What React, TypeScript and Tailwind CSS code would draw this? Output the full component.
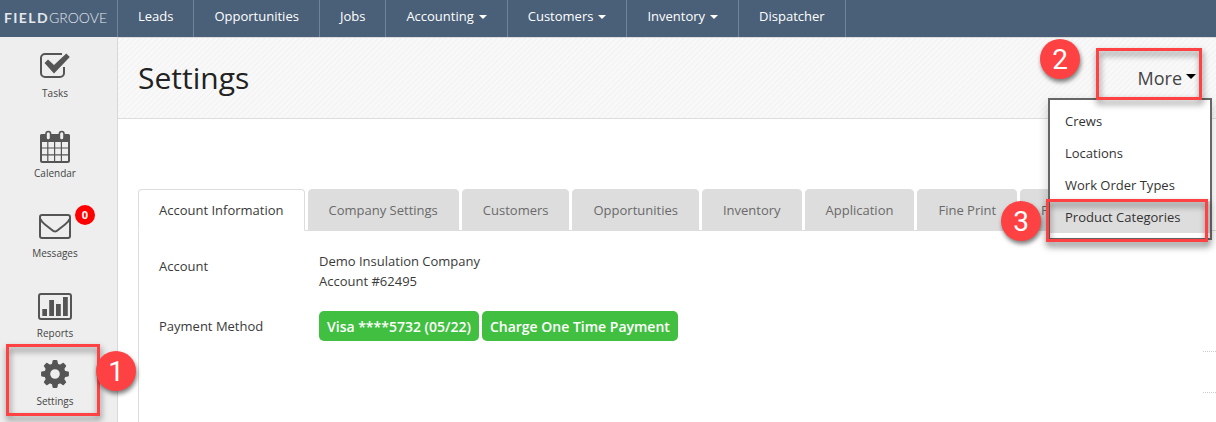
import type { ReactNode } from "react";
import clsx from "clsx";

const navItems = [
  { label: "Leads" },
  { label: "Opportunities" },
  { label: "Jobs" },
  { label: "Accounting", menu: true },
  { label: "Customers", menu: true },
  { label: "Inventory", menu: true },
  { label: "Dispatcher" },
];

const tabs = [
  "Account Information",
  "Company Settings",
  "Customers",
  "Opportunities",
  "Inventory",
  "Application",
  "Fine Print",
  "F",
];

const moreItems = ["Crews", "Locations", "Work Order Types", "Product Categories"];

function TasksIcon() {
  return (
    <svg width="30" height="26" viewBox="0 0 30 26" aria-hidden="true">
      <path
        d="M22 1H5a4 4 0 0 0-4 4v15a4 4 0 0 0 4 4h15a4 4 0 0 0 4-4v-6"
        fill="none"
        stroke="#555"
        strokeWidth="2"
      />
      <path d="M4.500 10l3.500-3.500 6 5.500L26.300.6l3.500 3.500L14 20.500z" fill="#555" />
    </svg>
  );
}

function CalendarIcon() {
  return (
    <svg width="30" height="33" viewBox="0 0 30 33" aria-hidden="true">
      <path d="M2 4h26a2 2 0 0 1 2 2v6H0V6a2 2 0 0 1 2-2z" fill="#555" />
      <rect x="1" y="5" width="28" height="27" rx="1.5" fill="none" stroke="#555" strokeWidth="2" />
      <path d="M7.8 12v20M14.6 12v20M21.4 12v20M1 18h28M1 24.8h28" stroke="#555" strokeWidth="1.2" />
      <rect x="6" y="1.5" width="4.6" height="8.5" rx="2.3" fill="#eee" stroke="#555" strokeWidth="1.6" />
      <rect x="19.4" y="1.5" width="4.6" height="8.5" rx="2.3" fill="#eee" stroke="#555" strokeWidth="1.6" />
    </svg>
  );
}

function MessagesIcon() {
  return (
    <svg width="32" height="25" viewBox="0 0 32 25" aria-hidden="true">
      <rect x="1" y="1" width="30" height="23" rx="2" fill="none" stroke="#555" strokeWidth="2" />
      <path
        d="M1.500 5C2 7 4 9 6 10.500l7 5.500c2 2 4 2 6 0l7-5.500c2-1.500 4-3.500 4.500-5.500"
        fill="none"
        stroke="#555"
        strokeWidth="2"
      />
    </svg>
  );
}

function ReportsIcon() {
  return (
    <svg width="34" height="27" viewBox="0 0 34 27" aria-hidden="true">
      <rect x="1" y="1" width="32" height="25" rx="2" fill="none" stroke="#555" strokeWidth="2" />
      <path d="M4.300 16H9v7H4.300zM11.200 7H16v16h-4.800zM18 11h4.800v12H18zM25 4h4.800v19H25z" fill="#555" />
    </svg>
  );
}

function SettingsIcon() {
  const teeth = [0, 45, 90, 135, 180, 225, 270, 315];
  return (
    <svg width="28" height="28" viewBox="-14 -14 28 28" aria-hidden="true">
      <circle r="7.700" fill="none" stroke="#555" strokeWidth="5.800" />
      {teeth.map((angle) => (
        <path key={angle} d="M-3.300-9l.9-4.200q.2-.7.900-.7h3q.7 0 .9.700l.9 4.200z" fill="#555" transform={`rotate(${angle})`} />
      ))}
    </svg>
  );
}

function Caret({ className }: { className?: string }) {
  return (
    <svg className={className} viewBox="0 0 8 4" aria-hidden="true">
      <path d="M0 0h8L4 4z" fill="currentColor" />
    </svg>
  );
}

/** Numbered red callout with a soft shadow. */
function StepBadge({ step, className }: { step: number; className: string }) {
  return (
    <span
      className={clsx(
        "absolute z-20 flex size-10 items-center justify-center rounded-full bg-[#fe4243] pt-0.5 font-['Roboto',sans-serif] text-[28px] leading-none text-white shadow-[1px_3px_4px_rgba(0,0,0,0.5)]",
        className
      )}
    >
      {step}
    </span>
  );
}

/** Red outline drawn around whatever the step refers to. */
function StepFrame({ className }: { className: string }) {
  return (
    <span
      className={clsx(
        "pointer-events-none absolute z-10 border-3 border-[#fe4243] drop-shadow-[1px_4px_3px_rgba(0,0,0,0.5)]",
        className
      )}
    />
  );
}

function SideLink({ label, icon, children, className }: { label: string; icon: ReactNode; children?: ReactNode; className?: string }) {
  return (
    <div className={clsx("relative w-[110px]", className)}>
      <a href="#" className="flex flex-col items-center text-[10px] leading-4 text-[#444]">
        <span className="flex h-9 items-center">{icon}</span>
        <span className="mt-px">{label}</span>
      </a>
      {children}
    </div>
  );
}

function TopNav() {
  return (
    <nav className="flex h-[37px] bg-[#4a6078] text-[13px] text-white">
      <a
        href="#"
        className="flex w-[118px] items-center border-r border-[#71839a] pb-[3px] pl-1 font-['Lato',sans-serif] text-[14px] text-[#e4e8ec]"
      >
        <span className="font-bold tracking-widest">FIELD</span>
        <span className="font-light">GROOVE</span>
      </a>
      {navItems.map((item) =>
        item.menu ? (
          <button key={item.label} type="button" className="flex items-center gap-[5px] border-r border-[#71839a] px-5 pb-[3px]">
            {item.label}
            <Caret className="h-1 w-2" />
          </button>
        ) : (
          <a key={item.label} href="#" className="flex items-center border-r border-[#71839a] px-5 pb-[3px]">
            {item.label}
          </a>
        )
      )}
    </nav>
  );
}

function Sidebar() {
  return (
    <aside className="w-[118px] shrink-0 border-r border-[#d8d8d8] bg-[#eee] pt-[11px]">
      <SideLink label="Tasks" icon={<TasksIcon />} className="h-20" />
      <SideLink label="Calendar" icon={<CalendarIcon />} className="h-20" />
      <SideLink label="Messages" icon={<MessagesIcon />} className="h-20">
        <span className="absolute -top-[3px] left-[75px] flex size-5 items-center justify-center rounded-full bg-[#f00] text-[11px] font-bold text-white">
          0
        </span>
      </SideLink>
      <SideLink label="Reports" icon={<ReportsIcon />} className="h-[68px]" />
      <SideLink label="Settings" icon={<SettingsIcon />}>
        <StepFrame className="-top-3 left-[6px] h-[72px] w-[94px]" />
        <StepBadge step={1} className="-top-[5px] left-24" />
      </SideLink>
    </aside>
  );
}

function MoreMenu() {
  return (
    <div className="relative">
      <button type="button" className="flex items-center gap-1 pr-5 text-[18px] text-[#444]">
        More
        <Caret className="mb-1 h-[5px] w-[10px] text-black" />
      </button>
      <ul className="absolute top-[33px] right-1 z-10 w-[164px] border-2 border-[#666] bg-white py-[5px] text-[13px] text-[#333] shadow-[0_5px_10px_rgba(0,0,0,0.2)]">
        {moreItems.map((item, i) => (
          <li key={item}>
            <a href="#" className={clsx("block px-[15px] leading-8", i === 3 && "bg-[#ddd]")}>
              {item}
            </a>
          </li>
        ))}
      </ul>
      <StepFrame className="-top-[17px] right-[14px] h-[52px] w-[106px]" />
      <StepBadge step={2} className="-top-[26px] right-[136px]" />
      <StepFrame className="top-[134px] right-2 h-[43px] w-[162px]" />
      <StepBadge step={3} className="top-[136px] right-[175px]" />
    </div>
  );
}

export default function App() {
  return (
    <div className="flex min-h-screen flex-col overflow-x-hidden bg-white font-['Open_Sans',sans-serif] text-[13px] text-[#3a3a3a]">
      <TopNav />
      <div className="flex grow">
        <Sidebar />
        <main className="min-w-0 grow">
          <header className="flex h-[82px] items-center justify-between border-y border-[#ddd] bg-[#f7f7f7] bg-[repeating-linear-gradient(135deg,#f3f3f3_0px,#f9f9f9_2px,#f9f9f9_3px,#f3f3f3_4px)] pl-5">
            <h1 className="pb-0.5 text-[30px] text-[#222]">Settings</h1>
            <MoreMenu />
          </header>
          <div className="pt-[70px] pl-5">
            <div role="tablist" className="flex gap-[3px] border-b border-[#ddd]">
              {tabs.map((tab, i) => (
                <button
                  key={tab}
                  type="button"
                  role="tab"
                  aria-selected={i === 0}
                  className={clsx(
                    "-mb-px h-[42px] rounded-t border px-5 pt-0.5 whitespace-nowrap",
                    i === 0 ? "border-[#ddd] border-b-white bg-white" : "border-[#ddd] bg-[#ddd] text-[#6a6a6a]"
                  )}
                >
                  {tab}
                </button>
              ))}
            </div>
            <div role="tabpanel" className="border-l border-[#ddd] pt-5 pl-5">
              <dl className="grid grid-cols-[160px_1fr] gap-y-5">
                <dt className="leading-[30px]">Account</dt>
                <dd className="leading-5">
                  Demo Insulation Company
                  <br />
                  Account #62495
                </dd>
                <dt className="leading-[30px]">Payment Method</dt>
                <dd className="flex gap-[3px] text-[14px] font-semibold text-white">
                  <button type="button" className="h-[30px] rounded-[5px] bg-[#41bf41] px-2">
                    Visa ****5732 (05/22)
                  </button>
                  <button type="button" className="h-[30px] rounded-[5px] bg-[#41bf41] px-2">
                    Charge One Time Payment
                  </button>
                </dd>
              </dl>
              <div className="mt-[10px] ml-auto h-[41px] w-[13px] border-t border-dotted border-[#ccc]" />
              <div className="ml-auto h-[30px] w-[13px] border-t border-dotted border-[#ccc]" />
            </div>
          </div>
        </main>
      </div>
    </div>
  );
}
